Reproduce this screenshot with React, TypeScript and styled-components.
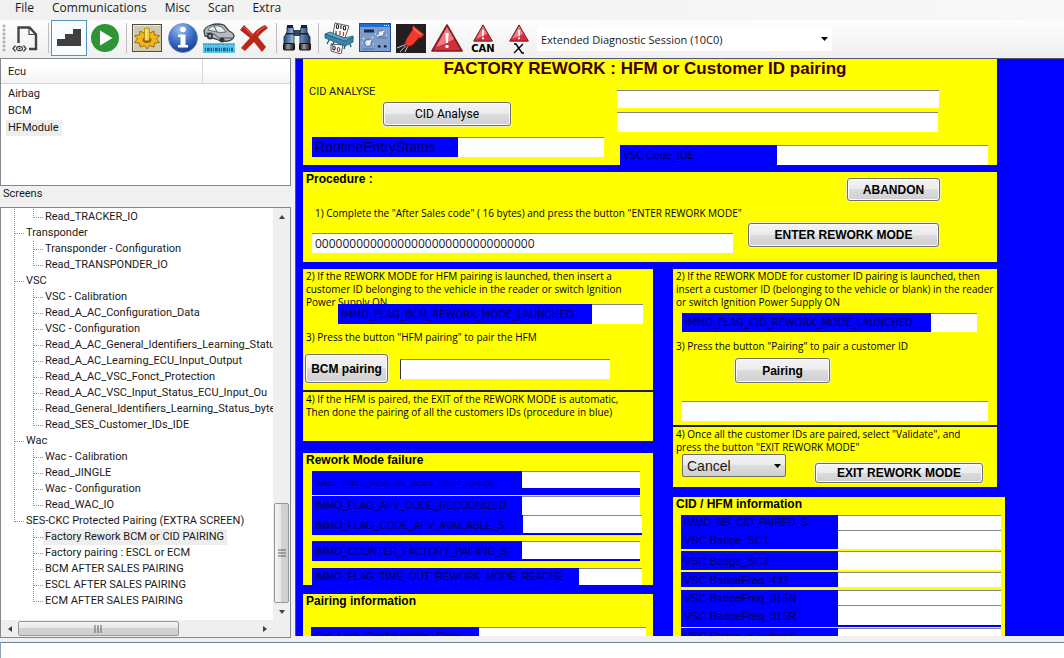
import React, { useId } from "react";
import styled, { createGlobalStyle, css } from "styled-components";

const YELLOW = "#ffff00";
const BLUE = "#0000ff";
const INK = "#1a1a1a";

const GlobalStyle = createGlobalStyle`
  * { box-sizing: border-box; }
  body { margin: 0; background: #f0f0f0; color: ${INK}; font-family: "Liberation Sans", Arial, sans-serif; font-size: 11px; }
  button, input, select { font: inherit; color: inherit; margin: 0; }
  ul { list-style: none; margin: 0; padding: 0; }
  h1, h2, p { margin: 0; }
`;

/* ---------- window frame ---------- */

const Window = styled.div`
  display: flex;
  flex-direction: column;
  height: 100vh;
  overflow: hidden;
`;

const MenuBar = styled.nav`
  display: flex;
  flex: none;
  height: 20px;
  padding: 0 6px;
  background: linear-gradient(90deg, #f0f0f0, #f8f8f8);
`;

const MenuItem = styled.button`
  height: 15px;
  padding: 0 9px;
  border: 0;
  background: none;
  font-family: "Open Sans", "Noto Sans", sans-serif;
  font-size: 12px;
  line-height: 15px;
`;

const ToolBar = styled.div`
  display: flex;
  flex: none;
  height: 38px;
  align-items: flex-start;
  background: linear-gradient(#fdfdfd, #efefef);
`;

const Grip = styled.span`
  width: 9px;
  height: 28px;
  margin-top: 4px;
  background: radial-gradient(circle at 4px 2px, #b4b4b4 1px, transparent 2px) 0 0 / 9px 4px;
`;

const ToolButton = styled.button<{ $active?: boolean }>`
  display: grid;
  place-items: center;
  flex: none;
  width: 36px;
  height: 36px;
  padding: 0;
  border: 1px solid ${(p) => (p.$active ? "#4f97b8" : "transparent")};
  background: ${(p) => (p.$active ? "#fafdff" : "none")};
  svg { display: block; }
`;

const ToolSeparator = styled.span`
  flex: none;
  width: 6px;
  height: 30px;
  margin-top: 3px;
  background: linear-gradient(#bdbdbd, #bdbdbd) 3px 0 / 1px 100% no-repeat;
`;

const SelectBox = styled.span<{ $raised?: boolean }>`
  display: grid;
  align-items: center;
  ${(p) =>
    p.$raised
      ? css`
          flex: 0 1 104px;
          height: 23px;
          border: 1px solid #707070;
          border-radius: 2px;
          background: linear-gradient(#f2f2f2, #ebebeb 50%, #dddddd 50%, #cfcfcf);
          font-size: 14px;
        `
      : css`
          flex: 0 1 295px;
          height: 24px;
          margin-top: 7px;
          background: #fff;
          font-family: "Open Sans", "Noto Sans", sans-serif;
          font-size: 11px;
        `}
  select, svg { grid-area: 1 / 1; }
  select {
    width: 100%;
    height: 100%;
    padding: 0 4px;
    border: 0;
    background: none;
    appearance: none;
  }
  svg { justify-self: end; margin-right: 4px; pointer-events: none; }
`;

const Workspace = styled.div`
  display: flex;
  flex: 1;
  min-height: 0;
  gap: 4px;
`;

const OutputPane = styled.footer`
  flex: none;
  height: 16px;
  margin-top: 4px;
  border-top: 1px solid #6b7f95;
  border-left: 1px solid #8fa3b8;
  background: #fff;
`;

/* ---------- side bar ---------- */

const SideBar = styled.aside`
  display: flex;
  flex-direction: column;
  flex: none;
  width: 291px;
  font-family: Roboto, sans-serif;
  font-size: 11px;
`;

const EcuBox = styled.div`
  height: 128px;
  border: 1px solid #828790;
  background: #fff;
`;

const EcuTable = styled.table`
  width: 100%;
  border-collapse: collapse;
  th {
    height: 24px;
    padding: 2px 7px 0;
    border-right: 1px solid #d5d9de;
    border-bottom: 1px solid #d5d5d5;
    background: linear-gradient(#ffffff 40%, #f2f3f5);
    font-weight: normal;
    text-align: left;
  }
  th:first-child { width: 201px; }
  th:last-child { border-right: 0; }
  td { height: 17px; padding: 0 5px; line-height: 16px; }
  tbody tr:first-child td { padding-top: 2px; height: 19px; }
`;

const ListText = styled.span<{ $selected?: boolean }>`
  display: inline-block;
  height: 16px;
  padding: 0 3px 0 2px;
  line-height: 16px;
  white-space: nowrap;
  background: ${(p) => (p.$selected ? "#eeeeee" : "transparent")};
`;

const SideCaption = styled.h2`
  height: 21px;
  padding-left: 3px;
  font-size: 11px;
  font-weight: normal;
  line-height: 15px;
`;

const TreeBox = styled.div`
  display: grid;
  grid-template: minmax(0, 1fr) 17px / minmax(0, 1fr) 17px;
  flex: 1;
  min-height: 0;
  border: 1px solid #828790;
  background: #fff;
`;

const TreeView = styled.div`
  padding: 1px 0 0 13px;
  overflow: hidden;
`;

const TreeNode = styled.li`
  &:not(:last-child) {
    background: linear-gradient(#909090 50%, transparent 50%) 0 0 / 1px 2px repeat-y;
  }
  & > ul { margin-left: 19px; }
`;

const TreeRow = styled.div`
  display: flex;
  height: 16px;
`;

const TreeElbow = styled.span`
  flex: none;
  width: 10px;
  height: 9px;
  border-bottom: 1px dotted #909090;
  background: linear-gradient(#909090 50%, transparent 50%) 0 0 / 1px 2px repeat-y;
`;

const ScrollTrack = styled.div<{ $horizontal?: boolean }>`
  display: flex;
  flex-direction: ${(p) => (p.$horizontal ? "row" : "column")};
  align-items: stretch;
  background: #efefef;
`;

const ScrollArrow = styled.button`
  display: grid;
  place-items: center;
  flex: none;
  width: 17px;
  height: 17px;
  padding: 0;
  border: 0;
  background: none;
`;

const ScrollSpace = styled.span<{ $grow: number }>`
  flex: ${(p) => p.$grow} 1 0;
`;

const ScrollThumb = styled.span<{ $grow: number; $horizontal?: boolean }>`
  display: grid;
  place-items: center;
  flex: ${(p) => p.$grow} 1 0;
  margin: ${(p) => (p.$horizontal ? "1px 0" : "0 1px")};
  border: 1px solid #979797;
  border-radius: 2px;
  background: linear-gradient(${(p) => (p.$horizontal ? "180deg" : "90deg")}, #f5f5f5, #e6e6e8 50%, #d2d2d5 50%, #cfcfd3);
`;

/* ---------- diagnostic form ---------- */

const Canvas = styled.main`
  flex: 1;
  min-width: 0;
  overflow: hidden;
  border: 1px solid #54546a;
  border-bottom: 0;
  border-right: 0;
  margin-bottom: 2px;
  padding: 0 67px 0 7px;
  background: ${BLUE};
`;

const Panel = styled.section<{ $gap?: number; $height: number; $wide?: boolean }>`
  min-height: ${(p) => p.$height}px;
  margin-top: ${(p) => p.$gap ?? 0}px;
  margin-right: ${(p) => (p.$wide ? -8 : 0)}px;
  background: ${YELLOW};
`;

const Divider = styled.hr`
  height: 2px;
  margin: 0;
  border: 0;
  background: #1c1c60;
`;

const Columns = styled.div`
  display: flex;
`;

const Column = styled.div<{ $grow: number }>`
  display: flex;
  flex-direction: column;
  flex: ${(p) => p.$grow} 1 0;
  min-width: 0;
`;

const StepColumns = styled.div`
  display: grid;
  grid-template-columns: minmax(0, 350fr) minmax(0, 324fr);
  gap: 20px;
  margin-top: 7px;
`;

const Title = styled.h1`
  height: 20px;
  padding-right: 10px;
  color: #400000;
  font-size: 17px;
  font-weight: bold;
  line-height: 20px;
  text-align: center;
`;

const Heading = styled.h2`
  padding: 0 3px;
  font-size: 12px;
  font-weight: bold;
  line-height: 14px;
  color: #000;
`;

const Caption = styled.p`
  margin: 6px 0 0 6px;
  font-family: Roboto, sans-serif;
  line-height: 13px;
`;

const Instruction = styled.p<{ $top?: number; $left?: number }>`
  padding: ${(p) => p.$top ?? 1}px 0 0 ${(p) => p.$left ?? 3}px;
  font-family: "Open Sans", sans-serif;
  font-size: 10px;
  line-height: 13px;
  color: #000;
`;

const Line = styled.span`
  display: block;
  white-space: nowrap;
`;

const Bar = styled.div<{ $top?: number; $left?: number; $right?: number; $align?: string }>`
  display: flex;
  align-items: ${(p) => p.$align ?? "flex-start"};
  justify-content: space-between;
  margin: ${(p) => p.$top ?? 0}px ${(p) => p.$right ?? 0}px 0 ${(p) => p.$left ?? 0}px;
`;

const PushButton = styled.button<{ $width: number; $height?: number; $plain?: boolean; $top?: number }>`
  flex: none;
  width: ${(p) => p.$width}px;
  height: ${(p) => p.$height ?? 24}px;
  margin-top: ${(p) => p.$top ?? 0}px;
  padding: 0;
  border: 1px solid #707070;
  border-radius: 3px;
  background: linear-gradient(#f4f4f4, #ebebeb 50%, #dcdcdc 50%, #cfcfcf);
  box-shadow: inset 0 0 0 1px #fafafa, 0 0 0 1px #f4f4b0;
  color: #000;
  font-family: ${(p) => (p.$plain ? "Roboto" : '"Liberation Sans"')}, sans-serif;
  font-size: 12px;
  font-weight: ${(p) => (p.$plain ? "normal" : "bold")};
  white-space: nowrap;
`;

const TextBox = styled.input<{ $height?: number; $edge?: boolean }>`
  display: block;
  flex: 1 1 0;
  width: 100%;
  min-width: 0;
  height: ${(p) => p.$height ?? 20}px;
  margin-left: ${(p) => (p.$edge ? 12 : 0)}px;
  padding: 0 3px;
  border: 0;
  border-top: 1px solid #83838f;
  border-left: ${(p) => (p.$edge ? "1px solid #30304a" : "0")};
  border-radius: 0;
  background: #fff;
  font-family: "Open Sans", sans-serif;
  font-size: 12px;
  outline: 0;
`;

const FieldLine = styled.div<{ $top?: number; $left: number; $right: number; $height: number }>`
  display: flex;
  height: ${(p) => p.$height}px;
  margin: ${(p) => p.$top ?? 0}px ${(p) => p.$right}px 0 ${(p) => p.$left}px;
  background: ${BLUE};
`;

type Face = "large" | "wide" | "small" | "tiny" | "plain";

const faces: Record<Face, ReturnType<typeof css>> = {
  large: css`font-size: 14px;`,
  wide: css`font-family: "DejaVu Sans", sans-serif; font-size: 10px;`,
  small: css`font-size: 10px;`,
  tiny: css`font-size: 8px;`,
  plain: css`font-size: 11px;`,
};

const FieldLabel = styled.label<{ $width: number; $face: Face }>`
  flex: none;
  display: flex;
  align-items: center;
  width: ${(p) => p.$width}px;
  padding-left: 3px;
  overflow: hidden;
  white-space: nowrap;
  background: ${BLUE};
  color: #000058;
  ${(p) => faces[p.$face]}
`;

interface FieldProps {
  label: string;
  labelWidth: number;
  face?: Face;
  top?: number;
  left?: number;
  right?: number;
  height?: number;
  boxHeight?: number;
}

function Field({ label, labelWidth, face = "small", top, left = 9, right = 13, height = 20, boxHeight }: FieldProps) {
  const id = useId();
  return (
    <FieldLine $top={top} $left={left} $right={right} $height={height}>
      <FieldLabel htmlFor={id} $width={labelWidth} $face={face}>{label}</FieldLabel>
      <TextBox id={id} $height={boxHeight ?? height} readOnly />
    </FieldLine>
  );
}

/* ---------- icons ---------- */

const DownArrow = () => (
  <svg width="7" height="4" viewBox="0 0 7 4"><path d="M0 0h7L3.5 4z" fill="#000" /></svg>
);

const arrowTurn = { up: 0, right: 90, down: 180, left: 270 };
const SmallArrow = ({ to }: { to: keyof typeof arrowTurn }) => (
  <svg width="8" height="8" viewBox="0 0 8 8">
    <path d="M1 6L4 2l3 4z" fill="#404040" transform={`rotate(${arrowTurn[to]} 4 4)`} />
  </svg>
);

const ThumbLines = ({ upright }: { upright?: boolean }) => (
  <svg width="8" height="8" viewBox="0 0 8 8">
    <path d={upright ? "M1 0v8M4 0v8M7 0v8" : "M0 1h8M0 4h8M0 7h8"} stroke="#606060" strokeWidth="1" />
  </svg>
);

const DocumentIcon = () => (
  <svg width="32" height="32" viewBox="0 0 32 32" fill="none" stroke="#444">
    <path d="M7.500 21V5.500h11l6.500 7V27h-7" strokeWidth="2.400" />
    <path d="M18 6v6.500h6" strokeWidth="1.200" />
    <path d="M4.500 23.500L2 26.500l2.500 3M12.500 23.500l2.500 3-2.500 3" strokeWidth="1.300" />
    <ellipse cx="8.500" cy="26.500" rx="3" ry="2.200" strokeWidth="1.200" />
    <circle cx="8.500" cy="26.500" r="1" fill="#444" stroke="none" />
  </svg>
);

const StairsIcon = () => (
  <svg width="32" height="32" viewBox="0 0 32 32">
    <path d="M4 24v-7h8v-5h8V7h8v17z" fill="#404040" />
  </svg>
);

const PlayIcon = () => (
  <svg width="32" height="32" viewBox="0 0 32 32">
    <circle cx="16" cy="16" r="14" fill="#2f9433" />
    <path d="M11 8.500v15L23.500 16z" fill="#fff" />
  </svg>
);

const GearIcon = () => (
  <svg width="32" height="32" viewBox="0 0 32 32">
    <rect x="1.500" y="2.500" width="29" height="27" fill="#cfc9ae" stroke="#4d4d42" />
    <path d="M2.500 28.500V3.500h27" fill="none" stroke="#eeead4" />
    <path
      d="M9 9l4 2 3-4 3 4 4-2 .5 4 5 .5-3 3.500 3 3.500-5 .5-.5 4-4.500-1.500L16 27l-2.500-3.500L9 25l-.5-4-5-.5 3-3.500-3-3.500 5-.5z"
      fill="#f3b618" stroke="#96650a" strokeWidth=".9"
    />
    <ellipse cx="16" cy="18" rx="4.500" ry="3" fill="#8b6510" />
    <path d="M13.500 6.500q2.500-1.500 5 0V18q-2.500 2-5 0z" fill="#f6cf3a" stroke="#a5780b" strokeWidth=".7" />
    <path d="M15 7.500V18" stroke="#fff2a0" />
  </svg>
);

const InfoIcon = () => (
  <svg width="32" height="32" viewBox="0 0 32 32">
    <defs>
      <radialGradient id="info" cx=".4" cy=".2" r=".9">
        <stop offset="0" stopColor="#9dbdf0" /><stop offset=".5" stopColor="#3b6fc9" /><stop offset="1" stopColor="#12307e" />
      </radialGradient>
    </defs>
    <circle cx="16" cy="16" r="14.500" fill="url(#info)" stroke="#6f86b5" strokeWidth=".8" />
    <circle cx="16" cy="7.500" r="2.800" fill="#fff" />
    <path d="M11 12.500h7.500v10.500H21v2.500H11V23h2.500v-8H11z" fill="#fff" />
  </svg>
);

const CarIcon = () => (
  <svg width="32" height="32" viewBox="0 0 32 32">
    <path d="M1 9Q2 5 8 3q6-2 13 0l5 6q5 2 5 5-1 4-6 5-7 1-12-2L2 14z" fill="#b5babd" stroke="#3c4246" strokeWidth="1.300" />
    <path d="M5 8q1-3 5-4 5-1 9 1l4 5q-6 1-9 0z" fill="#e9edef" stroke="#4b5155" strokeWidth=".8" />
    <path d="M11 4l3 6M3 11l8 1 5 4h13" fill="none" stroke="#4b5155" />
    <ellipse cx="7" cy="14" rx="3" ry="3.500" fill="#30353a" /><ellipse cx="7" cy="14" rx="1.400" ry="1.800" fill="#a0a5a8" />
    <ellipse cx="19" cy="18" rx="2.500" ry="2.500" fill="#30353a" />
    <rect x="0" y="21" width="32" height="10" fill="#58c4ee" />
    <path d="M0 22.500h32" stroke="#247aa5" strokeDasharray="1 1.500" />
    <path d="M2 27.500h28" stroke="#155f8c" strokeWidth="3.500" strokeDasharray="1 1 2.500 1 1.500 1" />
  </svg>
);

const CrossIcon = () => (
  <svg width="32" height="32" viewBox="0 0 32 32">
    <path d="M5 3l9 9q6-7 12-9l3 3q-6 4-10 9l8 10-4 5-8-10q-6 6-9 9l-4-3q5-6 9-10L1 8z" fill="#b8281a" />
    <path d="M5 5l9 9M26 4.500q-6 3-9 8" stroke="#dc6a50" strokeWidth="1" fill="none" />
  </svg>
);

const BinocularsIcon = () => (
  <svg width="32" height="32" viewBox="0 0 32 32">
    <defs>
      <linearGradient id="tube"><stop offset="0" stopColor="#23446f" /><stop offset=".4" stopColor="#a9c9ef" /><stop offset="1" stopColor="#1d3a63" /></linearGradient>
      <linearGradient id="rubber"><stop offset="0" stopColor="#111" /><stop offset=".4" stopColor="#999" /><stop offset="1" stopColor="#111" /></linearGradient>
    </defs>
    <rect x="12" y="8" width="8" height="6" fill="#33445c" />
    <path d="M6 5h6l1 7v10H3V15l3-5zM20 5h6v5l3 5v7H19V12z" fill="url(#tube)" stroke="#16263c" strokeWidth=".8" />
    <path d="M6 3h6v3H6zM20 3h6v3h-6zM5 11h8v1.500H5zM19 11h8v1.500h-8z" fill="#17202c" />
    <rect x="2.500" y="21.500" width="11" height="6.500" rx="1" fill="url(#rubber)" stroke="#111" />
    <rect x="18.500" y="21.500" width="11" height="6.500" rx="1" fill="url(#rubber)" stroke="#111" />
  </svg>
);

const ProgramIcon = () => (
  <svg width="32" height="32" viewBox="0 0 32 32">
    <path d="M12 1l14 3-4 12-12-4z" fill="#fff" stroke="#333" strokeWidth=".8" />
    <path d="M8 22l12 1-2 9-10-3z" fill="#fff" stroke="#333" strokeWidth=".8" />
    <g fill="none" stroke="#222" strokeWidth="1.100">
      <ellipse cx="14.500" cy="4.500" rx="1.200" ry="2" /><path d="M18 3v4" /><ellipse cx="21.500" cy="6" rx="1.200" ry="2" /><path d="M13 9v4" />
      <ellipse cx="11" cy="26" rx="1.200" ry="2" />
    </g>
    <g fill="none" stroke="#d22" strokeWidth="1.200"><path d="M17 9v4M20.500 10v4" /><ellipse cx="15.500" cy="27.500" rx="1.300" ry="2" /></g>
    <path d="M2 12l5-2 7 3 8 3 8-2v3l-8 4z" fill="#5ba9c6" stroke="#1c5570" strokeWidth=".8" />
    <path d="M2 12v4l20 8 8-4v-5l-8 4z" fill="#3b86a6" stroke="#1c5570" strokeWidth=".8" />
    <path d="M6 18l-2 4M11 20l-2 4M22 24l-1 3M27 22l1 3" stroke="#1c5570" strokeWidth="1.300" />
  </svg>
);

const PanelIcon = () => (
  <svg width="32" height="32" viewBox="0 0 32 32">
    <rect x=".5" y="1.500" width="31" height="28" fill="#7d9ecb" stroke="#1e4c8c" />
    <rect x="1" y="2" width="30" height="3" fill="#1c6ed0" />
    <path d="M25 3.500h5" stroke="#fff" strokeDasharray="1 1" />
    <rect x="5" y="7.500" width="10" height="3" fill="#1b2a45" />
    <g fill="#dfe8f4" stroke="#3a5278" strokeWidth=".8"><circle cx="22" cy="11.500" r="3" /><circle cx="9" cy="21" r="3.500" /></g>
    <path d="M22 12l-4 2M22 12l3-3M9 21l3-3M4 16l1 1M3 21h1M16 12h1M27 13h1M13 16l1-1M14 22h1" stroke="#f4f8ff" strokeWidth="1.200" />
    <path d="M19 25l1-2 1.500 2zM25 25l1-2 1.500 2z" fill="#14223c" stroke="#14223c" />
    <path d="M4 27h12M18 16h10" stroke="#5577a8" />
  </svg>
);

const TorchIcon = () => (
  <svg width="32" height="32" viewBox="0 0 32 32">
    <rect x="1" y="2" width="30" height="29" fill="#231f20" />
    <path d="M18 3.500l11 9-3 3.500-1.500-1-7 8-4.500 1.500-3-3 1.500-4.500 6-9z" fill="#f0392f" stroke="#b31a14" strokeWidth=".8" />
    <path d="M18 6l8 6.500" stroke="#ff7a6c" strokeWidth="1.200" />
    <path d="M10.500 22.500L2 26M11 23.500L5 30M12.500 24.500L10 30" stroke="#c9c9c9" strokeWidth="1" />
  </svg>
);

const TrianglePath = () => (
  <>
    <path d="M16 3L31 29H1z" fill="#d32f3c" stroke="#7d1a20" strokeWidth="1.600" strokeLinejoin="round" />
    <path d="M16 5l7 12q-8 5-18 8z" fill="#ee7b82" />
    <path d="M14.300 11h3.400l-.8 10h-1.800z" fill="#fff" />
    <circle cx="16" cy="24.500" r="1.700" fill="#fff" />
  </>
);

const WarningIcon = () => (
  <svg width="32" height="32" viewBox="0 0 32 32"><TrianglePath /></svg>
);

const WarningTag = styled.span`
  display: flex;
  flex-direction: column;
  align-items: center;
  font-family: "DejaVu Sans", sans-serif;
  font-size: 10px;
  font-weight: bold;
  line-height: 11px;
  color: #000;
`;

const CanIcon = () => (
  <WarningTag>
    <svg width="20" height="20" viewBox="0 0 32 32"><TrianglePath /></svg>
    CAN
  </WarningTag>
);

const ClearIcon = () => (
  <WarningTag>
    <svg width="20" height="20" viewBox="0 0 32 32"><TrianglePath /></svg>
    <svg width="12" height="11" viewBox="0 0 12 11"><path d="M1 1h2l6 9h2M10 1L1 10" fill="none" stroke="#000" strokeWidth="1.400" /></svg>
  </WarningTag>
);

type Tool = { name: string; Icon: () => React.JSX.Element; active?: boolean } | null;

const tools: Tool[] = [
  { name: "Document", Icon: DocumentIcon },
  null,
  { name: "Levels", Icon: StairsIcon, active: true },
  { name: "Run", Icon: PlayIcon },
  null,
  { name: "Settings", Icon: GearIcon },
  { name: "Information", Icon: InfoIcon },
  { name: "Vehicle", Icon: CarIcon },
  { name: "Delete", Icon: CrossIcon },
  null,
  { name: "Search", Icon: BinocularsIcon },
  null,
  { name: "Program", Icon: ProgramIcon },
  { name: "Control panel", Icon: PanelIcon },
  { name: "Flash", Icon: TorchIcon },
  { name: "Faults", Icon: WarningIcon },
  { name: "CAN faults", Icon: CanIcon },
  { name: "Clear faults", Icon: ClearIcon },
];

/* ---------- data ---------- */

const ecus = ["Airbag", "BCM", "HFModule"];

const tree: { name?: string; screens: string[] }[] = [
  { screens: ["Read_TRACKER_IO"] },
  { name: "Transponder", screens: ["Transponder - Configuration", "Read_TRANSPONDER_IO"] },
  {
    name: "VSC",
    screens: [
      "VSC - Calibration",
      "Read_A_AC_Configuration_Data",
      "VSC - Configuration",
      "Read_A_AC_General_Identifiers_Learning_Statu",
      "Read_A_AC_Learning_ECU_Input_Output",
      "Read_A_AC_VSC_Fonct_Protection",
      "Read_A_AC_VSC_Input_Status_ECU_Input_Ou",
      "Read_General_Identifiers_Learning_Status_byte",
      "Read_SES_Customer_IDs_IDE",
    ],
  },
  { name: "Wac", screens: ["Wac - Calibration", "Read_JINGLE", "Wac - Configuration", "Read_WAC_IO"] },
  {
    name: "SES-CKC Protected Pairing (EXTRA SCREEN)",
    screens: [
      "Factory Rework BCM or CID PAIRING",
      "Factory pairing : ESCL or ECM",
      "BCM AFTER SALES PAIRING",
      "ESCL AFTER SALES PAIRING",
      "ECM AFTER SALES PAIRING",
    ],
  },
];

const currentScreen = "Factory Rework BCM or CID PAIRING";

/* ---------- page ---------- */

function Screens() {
  return (
    <TreeBox>
      <TreeView>
        <ul>
          {tree.map((group) => (
            <TreeNode key={group.name ?? "first"}>
              {group.name && (
                <TreeRow><TreeElbow /><ListText>{group.name}</ListText></TreeRow>
              )}
              <ul>
                {group.screens.map((screen) => (
                  <TreeNode key={screen}>
                    <TreeRow>
                      <TreeElbow />
                      <ListText $selected={screen === currentScreen}>{screen}</ListText>
                    </TreeRow>
                  </TreeNode>
                ))}
              </ul>
            </TreeNode>
          ))}
        </ul>
      </TreeView>
      <ScrollTrack>
        <ScrollArrow aria-label="Scroll up"><SmallArrow to="up" /></ScrollArrow>
        <ScrollSpace $grow={278} />
        <ScrollThumb $grow={98}><ThumbLines /></ScrollThumb>
        <ScrollArrow aria-label="Scroll down"><SmallArrow to="down" /></ScrollArrow>
      </ScrollTrack>
      <ScrollTrack $horizontal>
        <ScrollArrow aria-label="Scroll left"><SmallArrow to="left" /></ScrollArrow>
        <ScrollThumb $grow={158} $horizontal><ThumbLines upright /></ScrollThumb>
        <ScrollSpace $grow={77} />
        <ScrollArrow aria-label="Scroll right"><SmallArrow to="right" /></ScrollArrow>
      </ScrollTrack>
      <ScrollTrack />
    </TreeBox>
  );
}

function HfmSteps() {
  return (
    <div>
      <Panel $height={121}>
        <Instruction>
          <Line>2) If the REWORK MODE for HFM pairing is launched, then insert a</Line>
          <Line>customer ID belonging to the vehicle in the reader or switch Ignition</Line>
          <Line>Power Supply ON</Line>
        </Instruction>
        <Field label="IMMO_FLAG_BCM_REWORK_MODE_LAUNCHED" labelWidth={254} face="wide" top={-5} left={35} right={10} />
        <Instruction $top={7}>3) Press the button "HFM pairing" to pair the HFM</Instruction>
        <Bar $top={10} $left={2} $right={43} $align="center">
          <PushButton $width={83} $height={29}>BCM pairing</PushButton>
          <TextBox aria-label="HFM pairing result" $edge readOnly />
        </Bar>
      </Panel>
      <Divider />
      <Panel $height={49}>
        <Instruction>
          <Line>4) If the HFM is paired, the EXIT of the REWORK MODE is automatic,</Line>
          <Line>Then done the pairing of all the customers IDs (procedure in blue)</Line>
        </Instruction>
      </Panel>
      <Panel $height={132} $gap={12}>
        <Heading>Rework Mode failure</Heading>
        <Field label="IMMO_STATE_REWORK_MODE_ROUT_ERROR" labelWidth={210} face="tiny" top={4} height={24} boxHeight={17} />
        <Field label="IMMO_FLAG_APV_CODE_RECOGNIZED" labelWidth={210} top={1} height={19} />
        <Field label="IMMO_FLAG_CODE_APV_AVAILABLE_S" labelWidth={211} right={11} height={20} boxHeight={18} />
        <Field label="IMMO_COUNTER_FACTORY_PAIRING_S" labelWidth={210} top={6} height={20} boxHeight={18} />
        <Field label="IMMO_FLAG_TIME_OUT_REWORK_MODE_REACHE" labelWidth={267} right={11} top={7} height={17} />
      </Panel>
      <Panel $height={54} $gap={9}>
        <Heading>Pairing information</Heading>
        <Field label="Get_Last_Configuration_Error" labelWidth={168} face="plain" top={19} left={8} right={7} height={18} />
      </Panel>
    </div>
  );
}

function CustomerIdSteps() {
  return (
    <div>
      <Panel $height={156}>
        <Instruction>
          <Line>2) If the REWORK MODE for customer ID pairing is launched, then</Line>
          <Line>insert a customer ID (belonging to the vehicle or blank) in the reader</Line>
          <Line>or switch Ignition Power Supply ON</Line>
        </Instruction>
        <Field label="IMMO_FLAG_CID_REWORK_MODE_LAUNCHED" labelWidth={249} face="wide" top={4} right={20} height={19} />
        <Instruction $top={8}>3) Press the button "Pairing" to pair a customer ID</Instruction>
        <Bar $top={5} $left={62}>
          <PushButton $width={95} $height={25}>Pairing</PushButton>
        </Bar>
        <Bar $top={18} $left={9} $right={9}>
          <TextBox aria-label="Customer ID pairing result" readOnly />
        </Bar>
      </Panel>
      <Divider />
      <Panel $height={60}>
        <Instruction>
          <Line>4) Once all the customer IDs are paired, select "Validate", and</Line>
          <Line>press the button "EXIT REWORK MODE"</Line>
        </Instruction>
        <Bar $left={9} $right={14}>
          <SelectBox $raised>
            <select aria-label="Exit action" defaultValue="Cancel">
              <option>Cancel</option>
              <option>Validate</option>
            </select>
            <DownArrow />
          </SelectBox>
          <PushButton $width={168} $height={20} $top={9}>EXIT REWORK MODE</PushButton>
        </Bar>
      </Panel>
      <Panel $height={150} $gap={10} $wide>
        <Heading>CID / HFM information</Heading>
        <Field label="IMMO_NB_CID_PAIRED_S" labelWidth={157} top={4} left={8} right={4} height={15} />
        <Field label="VSC Badge_SC1" labelWidth={157} face="plain" left={8} right={4} height={19} />
        <Field label="VSC Badge_SC2" labelWidth={157} face="plain" top={2} left={8} right={4} height={19} />
        <Field label="VSC BadgeFreq_433" labelWidth={157} face="plain" top={2} left={8} right={4} height={15} />
        <Field label="VSC BadgeFreq_315N" labelWidth={157} face="plain" top={3} left={8} right={4} height={15} />
        <Field label="VSC BadgeFreq_315R" labelWidth={157} face="plain" left={8} right={4} height={22} boxHeight={20} />
        <Field label="VSC Status_d'Authenti" labelWidth={157} face="plain" top={1} left={8} right={4} height={16} />
      </Panel>
    </div>
  );
}

export default function App() {
  return (
    <Window>
      <GlobalStyle />
      <MenuBar>
        {["File", "Communications", "Misc", "Scan", "Extra"].map((item) => (
          <MenuItem key={item}>{item}</MenuItem>
        ))}
      </MenuBar>
      <ToolBar>
        <Grip />
        {tools.map((tool, i) =>
          tool ? (
            <ToolButton key={i} aria-label={tool.name} $active={tool.active}><tool.Icon /></ToolButton>
          ) : (
            <ToolSeparator key={i} />
          )
        )}
        <SelectBox>
          <select aria-label="Diagnostic session">
            <option>Extended Diagnostic Session (10C0)</option>
          </select>
          <DownArrow />
        </SelectBox>
      </ToolBar>
      <Workspace>
        <SideBar>
          <EcuBox>
            <EcuTable>
              <thead><tr><th>Ecu</th><th aria-label="State" /></tr></thead>
              <tbody>
                {ecus.map((ecu) => (
                  <tr key={ecu}>
                    <td colSpan={2}><ListText $selected={ecu === "HFModule"}>{ecu}</ListText></td>
                  </tr>
                ))}
              </tbody>
            </EcuTable>
          </EcuBox>
          <SideCaption>Screens</SideCaption>
          <Screens />
        </SideBar>
        <Canvas>
          <Panel $height={106}>
            <Title>FACTORY REWORK : HFM or Customer ID pairing</Title>
            <Columns>
              <Column $grow={314}>
                <Caption>CID ANALYSE</Caption>
                <Bar $top={4} $left={80}>
                  <PushButton $width={128} $plain>CID Analyse</PushButton>
                </Bar>
                <Field label="RoutineEntryStatus" labelWidth={146} face="large" top={11} />
              </Column>
              <Column $grow={380}>
                <Bar $top={11} $right={58}><TextBox aria-label="Analysis result 1" $height={18} readOnly /></Bar>
                <Bar $top={4} $right={59}><TextBox aria-label="Analysis result 2" readOnly /></Bar>
                <Field label="VSC Code_IDE" labelWidth={157} face="wide" top={13} left={3} right={9} />
              </Column>
            </Columns>
          </Panel>
          <Panel $height={90} $gap={7}>
            <Bar $right={57}>
              <Heading>Procedure :</Heading>
              <PushButton $width={93} $height={23} $top={6}>ABANDON</PushButton>
            </Bar>
            <Bar $right={58}>
              <Column $grow={1}>
                <Instruction $top={6} $left={12}>
                  <Line>1) Complete the "After Sales code" ( 16 bytes) and press the button "ENTER REWORK MODE"</Line>
                </Instruction>
                <Bar $top={13} $left={9} $right={15}>
                  <TextBox aria-label="After Sales code" defaultValue={"0".repeat(32)} />
                </Bar>
              </Column>
              <PushButton $width={191} $top={22}>ENTER REWORK MODE</PushButton>
            </Bar>
          </Panel>
          <StepColumns>
            <HfmSteps />
            <CustomerIdSteps />
          </StepColumns>
        </Canvas>
      </Workspace>
      <OutputPane />
    </Window>
  );
}
